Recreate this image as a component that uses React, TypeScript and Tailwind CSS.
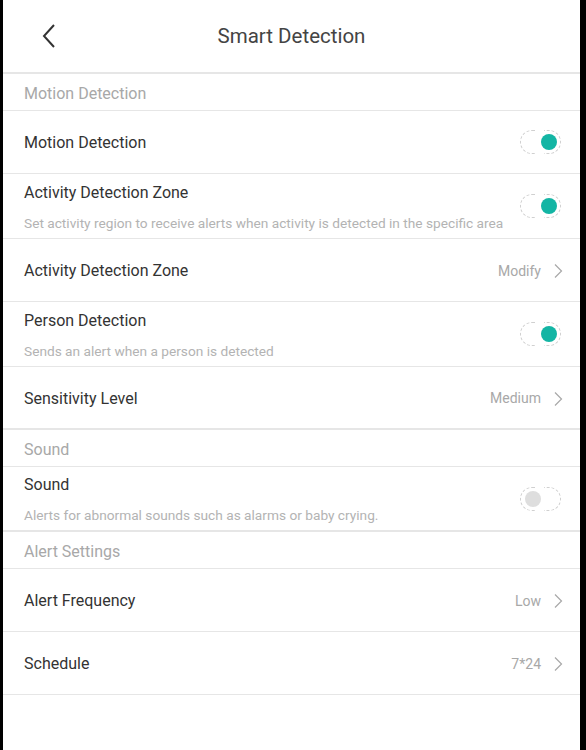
import React from "react";

type Row =
  | { kind: "section"; label: string; thick?: boolean }
  | { kind: "toggle"; title: string; sub?: string; on: boolean; thick?: boolean }
  | { kind: "link"; title: string; value: string; thick?: boolean };

const rows: Row[] = [
  { kind: "section", label: "Motion Detection" },
  { kind: "toggle", title: "Motion Detection", on: true },
  {
    kind: "toggle",
    title: "Activity Detection Zone",
    sub: "Set activity region to receive alerts when activity is detected in the specific area",
    on: true,
  },
  { kind: "link", title: "Activity Detection Zone", value: "Modify" },
  { kind: "toggle", title: "Person Detection", sub: "Sends an alert when a person is detected", on: true },
  { kind: "link", title: "Sensitivity Level", value: "Medium", thick: true },
  { kind: "section", label: "Sound" },
  { kind: "toggle", title: "Sound", sub: "Alerts for abnormal sounds such as alarms or baby crying.", on: false, thick: true },
  { kind: "section", label: "Alert Settings" },
  { kind: "link", title: "Alert Frequency", value: "Low" },
  { kind: "link", title: "Schedule", value: "7*24" },
];

const Toggle: React.FC<{ on: boolean }> = ({ on }) => (
  <div className="relative w-[41px] h-[24px] mr-[19px]">
    <div className="absolute inset-0 rounded-full border border-dashed border-[#d0d0d0]" />
    <div className="absolute left-[16px] top-0 w-[8px] h-[24px] bg-white" />
    <div
      className={
        on
          ? "absolute right-[4px] top-[4px] w-[16px] h-[16px] rounded-full bg-[#13b5a4]"
          : "absolute left-[5px] top-[4px] w-[16px] h-[16px] rounded-full bg-[#dedede]"
      }
    />
  </div>
);

const Chevron = () => (
  <svg width="10" height="16" viewBox="0 0 10 16" className="ml-[12px] mr-[17px]">
    <path d="M2 1.5 L8.5 8 L2 14.5" fill="none" stroke="#a8a8a8" strokeWidth="1.2" />
  </svg>
);

export default function App() {
  return (
    <div
      className="w-full h-[750px] bg-black flex pl-[3px] pr-[6px]"
      style={{ fontFamily: "Roboto, 'Noto Sans', sans-serif" }}
    >
      <div className="flex-1 bg-white flex flex-col">
        <header className="relative h-[74px] shrink-0 flex items-center justify-center border-b-2 border-[#e6e6e6]">
          <svg width="16" height="26" viewBox="0 0 16 26" className="absolute left-[38px] top-[23px]">
            <path d="M13 2 L3 13 L13 24" fill="none" stroke="#333" strokeWidth="2" />
          </svg>
          <h1 className="text-[20.5px] text-[#444] font-normal">Smart Detection</h1>
        </header>
        {rows.map((r, i) => {
          const border = r.thick ? "border-b-2 border-[#e6e6e6]" : "border-b border-[#e6e6e6]";
          if (r.kind === "section") {
            return (
              <div key={i} className={`h-[37px] shrink-0 flex items-center pl-[21px] pt-[3px] text-[16px] text-[#a8a8a8] ${border}`}>
                {r.label}
              </div>
            );
          }
          if (r.kind === "toggle") {
            return (
              <div key={i} className={`${r.sub ? "h-[65px]" : "h-[63px]"} shrink-0 flex items-center pl-[21px] ${border}`}>
                <div className={`flex-1 flex flex-col ${r.sub ? "pt-[1px]" : "pt-[2px]"}`}>
                  <span className="text-[16px] text-[#333] leading-[20px]">{r.title}</span>
                  {r.sub && (
                    <span className="text-[13.7px] text-[#b3b3b3] leading-[16px] mt-[12px] whitespace-nowrap">{r.sub}</span>
                  )}
                </div>
                <Toggle on={r.on} />
              </div>
            );
          }
          return (
            <div key={i} className={`h-[63px] shrink-0 flex items-center pl-[21px] pt-[2px] ${border}`}>
              <span className="flex-1 text-[16px] text-[#333]">{r.title}</span>
              <span className="text-[14px] text-[#a8a8a8]">{r.value}</span>
              <Chevron />
            </div>
          );
        })}
      </div>
    </div>
  );
}
